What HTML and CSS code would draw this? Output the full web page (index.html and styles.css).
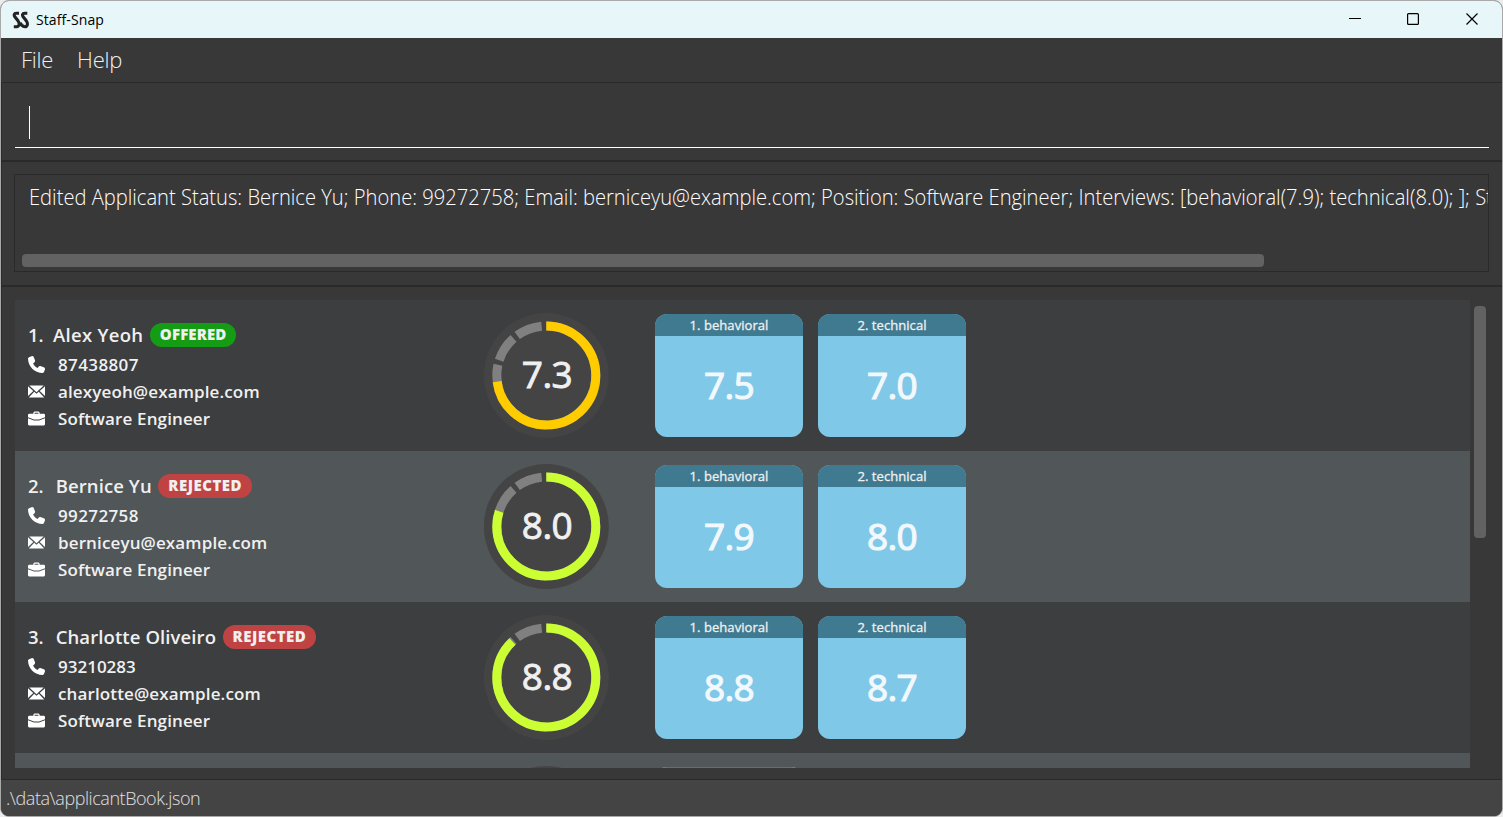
FILE: index.html
```html
<!DOCTYPE html>
<html lang="en">
<head>
<meta charset="utf-8">
<title>Staff-Snap</title>
<link rel="stylesheet" href="styles.css">
</head>
<body>
<svg width="0" height="0" class="defs" aria-hidden="true">
  <symbol id="phone" viewBox="0 0 17 17"><path d="M1 1.2 4.200 0l1.300.600 1.600 4-.3 1.400-1.700 1.400c1 2 2.500 3.500 4.500 4.500l1.400-1.700 1.400-.300 4 1.700.800 1.200-1.300 3.500-1.200.700C6.500 17 0 10.500 0 2.300z"/></symbol>
  <symbol id="mail" viewBox="0 0 17 12"><path d="M1.300 0h14.400L8.500 6.700zM0 .7 5.300 5.500 0 10.500zM17 .7v9.800l-5.300-5zM6.200 6.300l2.300 2 2.300-2 5.400 5.700H.8z"/></symbol>
  <symbol id="case" viewBox="0 0 17 14"><path d="M5.300 2.300V1.200L6.300 0h4.400l1 1.200v1.100H16l1 .8v2.600L11 8H6L0 5.700V3.100l1-.8zm1.300 0h3.800V1.300H6.600zM0 6.800l6 2.200h5l6-2.200V13l-1 1H1l-1-1z"/></symbol>
</svg>
<div class="window">
  <header class="titlebar">
    <svg class="logo" viewBox="0 0 17 18"><path d="M7 2.200H4.300C2 2.200 1.700 4.300 3 6l3 3.800c2 2.700 1.400 5.900-1.500 5.900H1.800M15.300 2.200h-2.600c-2.400 0-2.700 2.100-1.400 3.800l3 3.800c2 2.700 1.100 5.900-1.300 5.900-1.500 0-2.300-.500-3.300-1.600L8 12"/></svg>
    <span class="title">Staff-Snap</span>
    <svg class="winctl" viewBox="0 0 130 14"><path d="M1 5.500h12M118.500 .5l11 11M129.500 .5l-11 11"/><rect x="59.600" y=".6" width="10.800" height="10.800" rx="1"/></svg>
  </header>
  <nav class="menubar"><span>File</span><span>Help</span></nav>
  <section class="command"><div class="field"><i class="caret"></i></div></section>
  <section class="result"><div class="resultbox">
    <p class="message">Edited Applicant Status: Bernice Yu; Phone: 99272758; Email: berniceyu@example.com; Position: Software Engineer; Interviews: [behavioral(7.9); technical(8.0); ]; Status: REJECTED</p>
    <div class="hthumb"></div>
  </div></section>
  <section class="listpane">
    <div class="list" id="list"></div>
    <div class="vthumb"></div>
  </section>
  <footer class="statusbar"><span>.\data\applicantBook.json</span></footer>
</div>
<script src="app.js"></script>
</body>
</html>
```
FILE: styles.css
```css
* { box-sizing: border-box; }
body { margin: 0; background: #ececec; font-family: "Open Sans", "Noto Sans", sans-serif; overflow: hidden; }
.defs { position: absolute; }
.window { width: 1503px; height: 817px; display: flex; flex-direction: column; border: 1px solid #a9a9a9; border-radius: 9px; overflow: hidden; background: #383838; }
.titlebar { height: 37px; flex: none; display: flex; align-items: center; background: #e6f6f9; padding: 0 24px 0 11px; }
.logo { width: 17px; height: 18px; fill: none; stroke: #222; stroke-width: 3.100; }
.title { font-size: 14px; color: #000; margin-left: 7px; letter-spacing: 0.1px; }
.winctl { width: 130px; height: 14px; margin-left: auto; fill: none; stroke: #000; stroke-width: 1.200; }
.menubar { height: 45px; flex: none; display: flex; align-items: center; padding: 0 20px 2px; gap: 24px; border-bottom: 1px solid #2a2a2a; font-size: 22px; font-weight: 300; letter-spacing: -0.250px; color: #f0f0f0; }
.command { height: 77px; flex: none; padding: 13px 13px 0; border-left: 1px solid #2a2a2a; }
.field { height: 52px; border-bottom: 1px solid #fff; padding: 10px 0 0 14px; }
.caret { display: block; width: 1px; height: 33px; background: #fff; }
.result { height: 127px; flex: none; border-top: 2px solid #2a2a2a; border-bottom: 2px solid #2a2a2a; border-left: 1px solid #2a2a2a; padding: 12px 13px 0 12px; }
.resultbox { height: 98px; border: 1px solid #2a2a2a; padding: 5px 0 0; overflow: hidden; }
.message { margin: 0 0 0 14px; width: max-content; white-space: nowrap; font-size: 22px; line-height: 32px; font-weight: 300; color: #fff; transform: scaleX(0.9155); transform-origin: left; }
.hthumb { width: 1242px; height: 13px; margin: 42px 0 0 7px; border-radius: 4px; background: #626262; }
.listpane { flex: 1; min-height: 0; display: flex; padding: 13px 15px 11px 13px; border-left: 1px solid #2a2a2a; }
.list { width: 1455px; overflow: hidden; }
.vthumb { width: 12px; height: 232px; margin: 6px 0 0 4px; border-radius: 4px; background: #626262; }
.row { height: 151px; display: flex; background: #3c3e3f; padding: 13px 0 0 13px; color: #f0f0f0; font-weight: 600; }
.row:nth-child(even) { background: #515658; }
.info { width: 456px; padding-top: 9px; }
.head { height: 26px; display: flex; align-items: center; font-size: 18.500px; white-space: pre; }
.head .no, .head .name { padding-bottom: 2px; }
.name { margin-left: 12px; letter-spacing: 0.100px; }
.row:first-child .name { margin-left: 9.300px; letter-spacing: 0.300px; }
.badge { height: 24px; line-height: 23px; border-radius: 12px; padding: 0 10px; margin-left: 6.500px; font-size: 15px; font-weight: 800; background: #c04343; color: #f0f0f0; letter-spacing: 0.500px; }
.badge.offered { background: #159c15; letter-spacing: 0.120px; }
.line { height: 27px; display: flex; align-items: center; font-size: 17px; letter-spacing: 0.130px; }
.head + .line { height: 30px; padding-top: 3px; letter-spacing: 0.380px; }
.row:nth-child(3) .head + .line { letter-spacing: 0; }
.line svg { width: 17px; height: 17px; fill: #fff; margin-right: 13px; }
.ring { width: 126px; height: 126px; margin-right: 45px; }
.ring .disc { fill: #444; }
.ring .track, .ring .arc { fill: none; stroke-width: 9; }
.ring .track { stroke: #808080; }
.ring text { font-size: 37px; font-weight: 400; letter-spacing: -0.500px; fill: #f0f0f0; stroke: #f0f0f0; stroke-width: 0.900; text-anchor: middle; }
.card { width: 148px; height: 123px; margin: 1px 15px 0 0; border-radius: 12px; overflow: hidden; background: #7fc8e8; text-align: center; }
.cardhead { height: 22px; line-height: 22px; background: #3f7a90; font-size: 13px; font-weight: 400; letter-spacing: 0.060px; -webkit-text-stroke: 0.300px #f0f0f0; }
.score { font-size: 37px; line-height: 98px; letter-spacing: -0.600px; color: #f2f8fc; font-weight: 400; -webkit-text-stroke: 1.200px #f2f8fc; }
.statusbar { height: 37px; flex: none; border-top: 1px solid #2a2a2a; background: #444; padding: 0 5px; display: flex; align-items: center; font-size: 18px; font-weight: 300; letter-spacing: -0.440px; color: #e0e0e0; }
```
FILE: app.js
```javascript
const applicants = [
  ["1.", "Alex Yeoh", "OFFERED", "87438807", "alexyeoh@example.com", 7.3, "7.5", "7.0"],
  ["2.", "Bernice Yu", "REJECTED", "99272758", "berniceyu@example.com", 8.0, "7.9", "8.0"],
  ["3.", "Charlotte Oliveiro", "REJECTED", "93210283", "charlotte@example.com", 8.8, "8.8", "8.7"]
];
const line = (icon, text) => `<div class="line"><svg><use href="#${icon}"/></svg><span>${text}</span></div>`;
const card = (title, score) => `<div class="card"><div class="cardhead">${title}</div><div class="score">${score}</div></div>`;
const rows = applicants.map(([no, name, status, phone, mail, rating, a, b]) => `
<div class="row">
  <div class="info">
    <div class="head"><span class="no">${no}</span><span class="name">${name}</span><span class="badge ${status.toLowerCase()}">${status}</span></div>
    ${line("phone", phone)}${line("mail", mail)}${line("case", "Software Engineer")}
  </div>
  <svg class="ring" viewBox="0 0 126 126">
    <circle class="disc" cx="62.300" cy="62.500" r="62.500"/>
    <circle class="track" cx="62.300" cy="62.500" r="49.500" pathLength="360" stroke-dasharray="30.500 5.500" transform="rotate(-90 62.300 62.500)"/>
    <circle class="arc" cx="62.300" cy="62.500" r="49.500" pathLength="360" stroke="${rating < 8 ? "#ffcc00" : "#ccff33"}" stroke-dasharray="${rating * 36} 360" transform="rotate(-90 62.300 62.500)"/>
    <text x="63" y="75">${rating.toFixed(1)}</text>
  </svg>
  ${card("1. behavioral", a)}${card("2. technical", b)}
</div>`);
// The next row is scrolled out of view except for its top edge.
rows.push(`<div class="row"><div class="info"></div><svg class="ring" viewBox="0 0 126 126"><circle class="disc" cx="62.300" cy="62.500" r="62.500"/></svg><div class="card"><div class="cardhead"></div></div></div>`);
document.getElementById("list").innerHTML = rows.join("");
```
